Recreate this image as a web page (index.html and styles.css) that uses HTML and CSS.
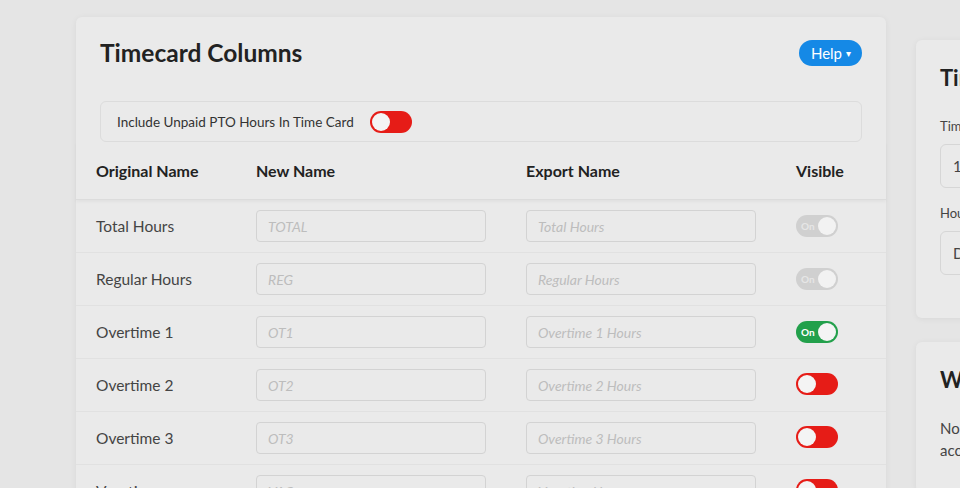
FILE: index.html
```html
<!DOCTYPE html>
<html>
<head>
<meta charset="utf-8">
<link rel="stylesheet" href="styles.css">
</head>
<body>
<div class="page">
  <main class="card main-card">
    <div class="card-head">
      <h1 class="title">Timecard Columns</h1>
      <button class="help">Help <span class="caret">&#9662;</span></button>
    </div>
    <div class="include">
      <span>Include Unpaid PTO Hours In Time Card</span>
      <span class="toggle off"><span class="knob"></span></span>
    </div>
    <div class="table">
      <div class="row head">
        <div class="c1">Original Name</div>
        <div class="c2">New Name</div>
        <div class="c3">Export Name</div>
        <div class="c4">Visible</div>
      </div>
      <div class="row">
        <div class="c1">Total Hours</div>
        <div class="c2"><input class="field" placeholder="TOTAL"></div>
        <div class="c3"><input class="field" placeholder="Total Hours"></div>
        <div class="c4"><span class="toggle disabled"><span class="lbl">On</span><span class="knob"></span></span></div>
      </div>
      <div class="row">
        <div class="c1">Regular Hours</div>
        <div class="c2"><input class="field" placeholder="REG"></div>
        <div class="c3"><input class="field" placeholder="Regular Hours"></div>
        <div class="c4"><span class="toggle disabled"><span class="lbl">On</span><span class="knob"></span></span></div>
      </div>
      <div class="row">
        <div class="c1">Overtime 1</div>
        <div class="c2"><input class="field" placeholder="OT1"></div>
        <div class="c3"><input class="field" placeholder="Overtime 1 Hours"></div>
        <div class="c4"><span class="toggle on"><span class="lbl">On</span><span class="knob"></span></span></div>
      </div>
      <div class="row">
        <div class="c1">Overtime 2</div>
        <div class="c2"><input class="field" placeholder="OT2"></div>
        <div class="c3"><input class="field" placeholder="Overtime 2 Hours"></div>
        <div class="c4"><span class="toggle off"><span class="knob"></span></span></div>
      </div>
      <div class="row">
        <div class="c1">Overtime 3</div>
        <div class="c2"><input class="field" placeholder="OT3"></div>
        <div class="c3"><input class="field" placeholder="Overtime 3 Hours"></div>
        <div class="c4"><span class="toggle off"><span class="knob"></span></span></div>
      </div>
      <div class="row">
        <div class="c1">Vacation</div>
        <div class="c2"><input class="field" placeholder="VAC"></div>
        <div class="c3"><input class="field" placeholder="Vacation Hours"></div>
        <div class="c4"><span class="toggle off"><span class="knob"></span></span></div>
      </div>
    </div>
  </main>
  <aside class="side">
    <section class="card side-card">
      <h2 class="side-title">Timecard Display</h2>
      <label class="side-label">Time Format</label>
      <div class="side-input">12 Hour</div>
      <label class="side-label">Hours Format</label>
      <div class="side-input">Decimal</div>
    </section>
    <section class="card side-card second">
      <h2 class="side-title">Workweek</h2>
      <p class="side-text">No workweek has been set for this account yet.</p>
    </section>
  </aside>
</div>
</body>
</html>
```

FILE: styles.css
```css
* { box-sizing: border-box; }
html, body { margin: 0; padding: 0; }
body {
  background: #e5e5e5;
  font-family: "Lato", "Liberation Sans", sans-serif;
  color: #333;
  width: 960px;
  height: 488px;
  overflow: hidden;
}
.page {
  display: flex;
  align-items: flex-start;
  gap: 30px;
  padding: 17px 0 0 76px;
}
.card {
  background: #eaeaea;
  border-radius: 6px;
  box-shadow: 0 1px 6px rgba(0,0,0,0.06);
}
.main-card {
  width: 810px;
  flex: none;
  height: 600px;
}
.card-head {
  display: flex;
  align-items: center;
  justify-content: space-between;
  padding: 0 24px;
  height: 73px;
}
.title {
  margin: 0;
  font-size: 24.5px;
  font-weight: 700;
  color: #222;
  margin-top: -2px;
}
.help {
  background: #1589e6;
  color: #fff;
  border: none;
  border-radius: 13px;
  height: 26px;
  padding: 0 11px 0 12px;
  font-family: inherit;
  font-size: 15px;
  margin-top: -1px;
  display: flex;
  align-items: center;
  gap: 4px;
}
.caret { font-size: 10px; }
.include {
  margin: 11px 24px 0 24px;
  height: 41px;
  border: 1px solid #dcdcdc;
  border-radius: 6px;
  display: flex;
  align-items: center;
  padding-left: 16px;
  gap: 16px;
  font-size: 13.5px;
  color: #333;
}
.toggle {
  position: relative;
  display: inline-flex;
  align-items: center;
  width: 42px;
  height: 22px;
  border-radius: 11px;
  flex: none;
}
.toggle .knob {
  position: absolute;
  top: 2px;
  width: 18px;
  height: 18px;
  border-radius: 50%;
  background: #f4f4f4;
}
.toggle.off { background: #e61c17; }
.toggle.off .knob { left: 2px; }
.toggle.on { background: #22a04b; }
.toggle.on .knob { right: 2px; }
.toggle.disabled { background: #d0d0d0; }
.toggle.disabled .knob { right: 2px; background: #f2f2f2; }
.toggle .lbl {
  font-size: 10px;
  font-weight: 700;
  color: #fff;
  padding-left: 5px;
}
.toggle.disabled .lbl { color: #e6e6e6; }
.row {
  display: flex;
  align-items: center;
  height: 53px;
  padding-left: 20px;
  border-bottom: 1px solid #e1e1e1;
  font-size: 15.5px;
  color: #444;
}
.row.head {
  height: 58px;
  font-size: 16px;
  font-weight: 700;
  color: #222;
  border-bottom: 1px solid #dcdcdc;
  box-shadow: 0 2px 3px rgba(0,0,0,0.04);
}
.c1 { width: 160px; }
.c2, .c3 { width: 270px; }
.c4 { flex: 1; }
.field {
  width: 230px;
  height: 32px;
  border: 1px solid #d3d3d3;
  border-radius: 4px;
  background: #eaeaea;
  padding: 0 11px;
  font-family: inherit;
  font-size: 14px;
  font-style: italic;
  outline: none;
}
.field::placeholder { color: #bdbdbd; }
.side {
  display: flex;
  flex-direction: column;
  gap: 24px;
  padding-top: 23px;
  flex: none;
  width: 300px;
}
.side-card {
  padding: 24px;
  height: 278px;
}
.side-card.second { height: 150px; }
.side-title {
  margin: 0 0 27px 0;
  font-size: 22px;
  font-weight: 700;
  color: #222;
}
.side-label {
  display: block;
  font-size: 13px;
  color: #444;
  margin-bottom: 10px;
}
.side-input {
  height: 44px;
  border: 1px solid #d6d6d6;
  border-radius: 6px;
  padding: 0 12px;
  display: flex;
  align-items: center;
  font-size: 15px;
  color: #444;
  margin-bottom: 17px;
}
.side-text {
  margin: 0;
  font-size: 15px;
  line-height: 22px;
  color: #444;
}
.second .side-title { margin-bottom: 24px; }
```
